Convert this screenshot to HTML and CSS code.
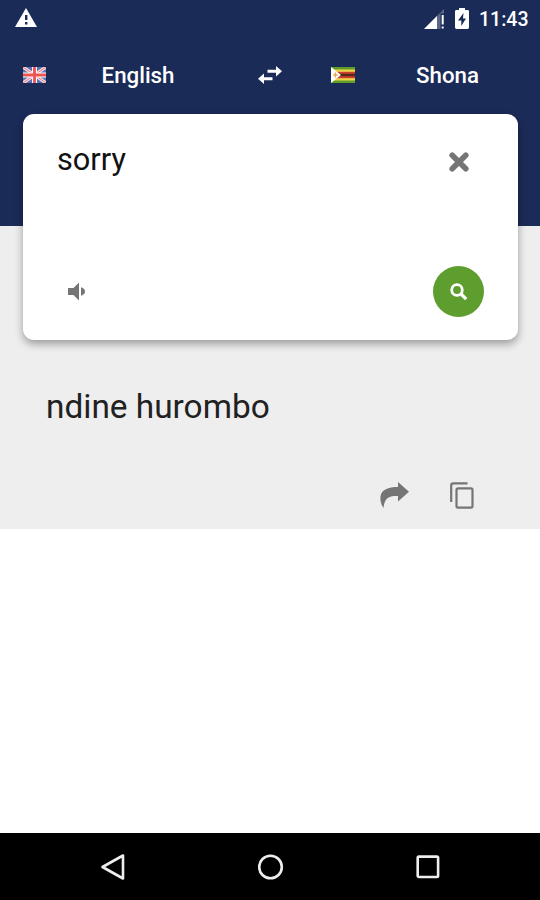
FILE: index.html
```html
<!DOCTYPE html>
<html lang="en">
<head>
    <meta charset="UTF-8">
    <meta name="viewport" content="width=device-width, initial-scale=1.0">
    <title>English Shona Translator</title>
    <link rel="stylesheet" href="styles.css">
</head>
<body>

    <header class="header">
        <div class="status-bar">
            <svg class="warning" width="22" height="19" viewBox="0 0 22 19">
                <path d="M11 0L22 19H0z" fill="#fff"/>
                <path d="M10 7h2.4v5H10zM10 14h2.4v2.4H10z" fill="#1b2b58"/>
            </svg>
            <svg class="signal" width="20" height="20" viewBox="0 0 20 20">
                <path d="M20 0v20H0z" fill="#5c6788"/>
                <path d="M13 7v13H0z" fill="#fff"/>
                <path d="M16.500 4.500h3.500V20h-3.500z" fill="#1b2b58"/>
                <path d="M17.7 6h2v9.500h-2zM17.700 17.500h2v2h-2z" fill="#fff"/>
            </svg>
            <svg class="battery" width="14" height="21" viewBox="0 0 14 21">
                <path d="M4 0h6v2h2.600Q14 2 14 3.400v16.200Q14 21 12.600 21H1.400Q0 21 0 19.600V3.400Q0 2 1.400 2H4z" fill="#fff"/>
                <path d="M8.500 5L3 12.500h3.300V18L11 10.500H8z" fill="#1b2b58"/>
            </svg>
            <span class="time">11:43</span>
        </div>

        <div class="languages">
            <svg class="flag" width="23" height="16" viewBox="0 0 23 16">
                <path d="M0 0h23v16H0z" fill="#5c70b4"/>
                <path d="M0 0l23 16M23 0L0 16" stroke="#f4dfe5" stroke-width="3.200"/>
                <path d="M0 0l23 16M23 0L0 16" stroke="#ee7777" stroke-width="1"/>
                <path d="M11.500 0v16M0 8h23" stroke="#fff" stroke-width="5"/>
                <path d="M11.500 0v16M0 8h23" stroke="#ed5350" stroke-width="2.800"/>
            </svg>
            <span class="language from">English</span>
            <svg class="swap" width="24" height="18" viewBox="0 0 24 18">
                <path d="M9.500 3.800H18V0l6 5.200-6 5.200V6.800H9.500zM14.500 11.200H6V7.600L0 12.800 6 18v-3.800h8.500z" fill="#fff"/>
            </svg>
            <svg class="flag flag-zw" width="24" height="16" viewBox="0 0 24 16">
                <path d="M0 0h24v16H0z" fill="#5e9e27"/>
                <path d="M0 2.500h24v11H0z" fill="#efd34b"/>
                <path d="M0 4.800h24v6.400H0z" fill="#c9402c"/>
                <path d="M0 6.800h24v2.400H0z" fill="#54281c"/>
                <path d="M0 0l10 8-10 8z" fill="#fff"/>
                <path d="M1.500 8l2-1 .8-2.500.9 2.500 2.300 1-2.300 1-.9 2.500-.8-2.500z" fill="#eca955"/>
            </svg>
            <span class="language to">Shona</span>
        </div>
    </header>

    <main>
        <section class="translator">
            <div class="card">
                <div class="card-row">
                    <span class="input-text">sorry</span>
                    <svg class="clear" width="20" height="20" viewBox="0 0 20 20">
                        <path d="M3.200 3.200l13.600 13.600M16.800 3.200L3.200 16.800" stroke="#757575" stroke-width="5.600" stroke-linecap="round"/>
                    </svg>
                </div>
                <div class="card-row card-actions">
                    <svg class="speaker" width="18" height="19" viewBox="0 0 18 19">
                        <path d="M0 6h5.500L11 .5v18L5.500 13H0zM13 5.300q4 1.200 4 4.200t-4 4.200z" fill="#757575"/>
                    </svg>
                    <div class="search">
                        <svg width="18" height="18" viewBox="0 0 18 18" fill="none" stroke="#fff">
                            <circle cx="7" cy="7" r="5.300" stroke-width="2.800"/>
                            <path d="M11 11l5.200 5.200" stroke-width="3.200"/>
                        </svg>
                    </div>
                </div>
            </div>

            <p class="result">ndine hurombo</p>

            <div class="result-actions">
                <svg width="29" height="26" viewBox="0 0 29 26">
                    <path d="M18 0l11 9.800L18 19.500V14C10 13.600 4.500 15 3.500 26 .8 22 0 18 .5 14.500 1.500 7.500 8 5 18 5z" fill="#757575"/>
                </svg>
                <svg width="24" height="27" viewBox="0 0 24 27" fill="none" stroke="#757575" stroke-width="2.200">
                    <path d="M17.500 1.400H3.200Q1.200 1.400 1.200 3.400V20"/>
                    <rect x="6.500" y="6.400" width="16" height="19.200" rx="1.500"/>
                </svg>
            </div>
        </section>
    </main>

    <nav class="nav-bar">
        <svg width="26" height="28" viewBox="0 0 26 28">
            <path d="M2.500 14L23 2.500v23z"/>
        </svg>
        <svg width="26" height="28" viewBox="0 0 26 28">
            <circle cx="12.500" cy="14" r="11.300"/>
        </svg>
        <svg width="26" height="28" viewBox="0 0 26 28">
            <rect x="2.700" y="3.600" width="20.400" height="20.400" rx="1.200"/>
        </svg>
    </nav>

</body>
</html>
```

FILE: styles.css
```css
* {
    box-sizing: border-box;
}

body {
    display: flex;
    flex-direction: column;
    height: 900px;
    margin: 0;
    background-color: #fff;
    font-family: Roboto, sans-serif;
}

svg {
    display: block;
    flex: none;
}

.header {
    height: 226px;
    background-color: #1b2b58;
    color: #fff;
}

.status-bar {
    display: flex;
    align-items: center;
    height: 38px;
    padding: 0 12px 0 15px;
}

.warning {
    margin-top: -3px;
}

.signal {
    margin-left: auto;
    margin-right: 11px;
}

.battery {
    margin-top: -2px;
    margin-right: 10px;
}

.time {
    width: 49px;
    font-size: 19.5px;
    font-weight: 500;
    white-space: nowrap;
}

.languages {
    display: grid;
    grid-template-columns: 23px 184px 28px 73px 24px 1fr;
    align-items: center;
    height: 76px;
    padding: 0 0 2px 23px;
}

.language {
    font-size: 22.3px;
    font-weight: 500;
    text-align: center;
}

.swap {
    margin-left: 28px;
}

.flag-zw {
    grid-column: 5;
}

main {
    flex: 1;
}

.translator {
    display: flow-root;
    height: 303px;
    padding: 0 22px 0 23px;
    background-color: #eee;
}

.card {
    display: flex;
    flex-direction: column;
    justify-content: space-between;
    position: relative;
    height: 226px;
    margin-top: -112px;
    padding: 27px 34px 23px;
    border-radius: 11px;
    background-color: #fff;
    box-shadow: 0 4px 9px rgba(0, 0, 0, 0.35);
}

.card-row {
    display: flex;
    align-items: center;
    justify-content: space-between;
}

.input-text {
    padding-top: 1px;
    color: #111;
    font-size: 30.7px;
    line-height: 36px;
}

.clear {
    margin-top: 4px;
    margin-right: 15px;
}

.speaker {
    margin-left: 11px;
}

.search {
    display: flex;
    align-items: center;
    justify-content: center;
    width: 51px;
    height: 51px;
    border-radius: 50%;
    background-color: #5e9e2f;
}

.result {
    margin: 46px 0 0 23px;
    color: #212121;
    font-size: 33.4px;
    line-height: 42px;
}

.result-actions {
    display: flex;
    justify-content: flex-end;
    gap: 41px;
    margin: 54px 44px 0 0;
}

.nav-bar {
    display: flex;
    justify-content: space-between;
    align-items: center;
    height: 67px;
    padding: 0 99px 0 100px;
    background-color: #000;
}

.nav-bar svg {
    fill: none;
    stroke: #eee;
    stroke-width: 2.6;
    stroke-linejoin: round;
}
```
